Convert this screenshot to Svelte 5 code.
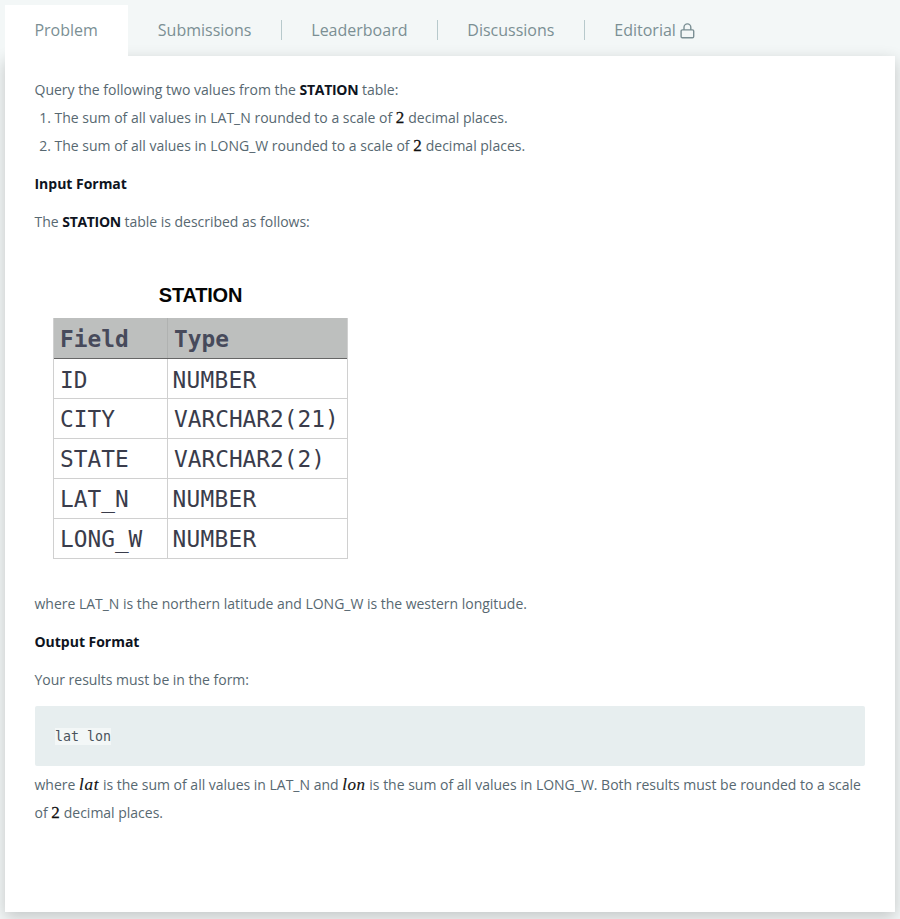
<script>
  const tabs = ['Submissions', 'Leaderboard', 'Discussions'];
  const columns = [
    ['ID', 'NUMBER'],
    ['CITY', 'VARCHAR2(21)'],
    ['STATE', 'VARCHAR2(2)'],
    ['LAT_N', 'NUMBER'],
    ['LONG_W', 'NUMBER']
  ];
</script>

<div class="page">
  <nav>
    <div class="tab active"><span class="label">Problem</span></div>
    {#each tabs as tab}
      <div class="tab"><span class="label">{tab}</span></div>
      <i class="sep"></i>
    {/each}
    <div class="tab">
      <span class="label">Editorial</span>
      <svg class="lock" width="15" height="16" viewBox="0 0 15 16" fill="none" stroke="#7b8f94" stroke-width="1.4">
        <rect x="1.1" y="6.9" width="12.6" height="7.8" rx="1.2" />
        <path d="M4 6.9V4.4a3.4 3.5 0 0 1 6.8 0v2.5" />
      </svg>
    </div>
  </nav>

  <main>
    <p class="tight">Query the following two values from the <strong class="name">STATION</strong> table:</p>
    <ol>
      <li>The sum of all values in LAT_N rounded to a scale of <span class="num">2</span> decimal places.</li>
      <li>The sum of all values in LONG_W rounded to a scale of <span class="num">2</span> decimal places.</li>
    </ol>
    <p><strong>Input Format</strong></p>
    <p>The <strong class="name">STATION</strong> table is described as follows:</p>

    <figure>
      <figcaption>STATION</figcaption>
      <div class="schema">
        <div class="row head"><span>Field</span><span>Type</span></div>
        {#each columns as [field, type]}
          <div class="row"><span>{field}</span><span class:number={type === 'NUMBER'}>{type}</span></div>
        {/each}
      </div>
    </figure>

    <p>where LAT_N is the northern latitude and LONG_W is the western longitude.</p>
    <p><strong>Output Format</strong></p>
    <p>Your results must be in the form:</p>
    <pre><code>lat lon</code></pre>
    <p class="last">where <em class="lat">lat</em> is the sum of all values in LAT_N and <em class="lon">lon</em> is the sum of all values in LONG_W. Both results must be rounded to a scale of <span class="num">2</span> decimal places.</p>
  </main>
</div>

<style>
  :global(body) {
    margin: 0;
    background: #f3f7f7;
  }
  .page {
    box-sizing: border-box;
    height: 919px;
    padding: 5px 5px 7px;
    display: flex;
    flex-direction: column;
    overflow: hidden;
    font-family: 'Open Sans', sans-serif;
    color: #576871;
  }
  nav {
    display: flex;
    height: 51px;
    flex: none;
    font-size: 16px;
    color: #7b8f94;
  }
  .tab {
    display: flex;
    align-items: center;
    box-sizing: border-box;
    height: 51px;
    padding: 0 29.45px 2px;
    white-space: nowrap;
  }
  .tab.active {
    position: relative;
    z-index: 1;
    width: 123px;
    margin-right: 0.4px;
    background: #fff;
  }
  .sep {
    width: 1px;
    height: 20px;
    margin-top: 15px;
    background: #b7c9cc;
  }
  .lock {
    margin: 2px 0 0 4px;
  }
  main {
    flex: 1;
    box-sizing: border-box;
    padding: 20px 30px 0 29.5px;
    background: #fff;
    box-shadow: 0 5px 15px rgba(0, 0, 0, 0.2);
    font-size: 14px;
    line-height: 28px;
    letter-spacing: -0.02px;
  }
  p {
    margin: 0 0 10px;
  }
  p.tight {
    margin: 0;
    letter-spacing: 0;
  }
  p.last {
    letter-spacing: -0.01px;
  }
  strong {
    color: #0e141e;
    font-weight: 700;
  }
  .name {
    letter-spacing: -0.3px;
  }
  ol {
    margin: 0 0 10px;
    padding-left: 20px;
    letter-spacing: 0;
  }
  .num,
  em {
    line-height: 0;
    font-family: 'Liberation Serif', serif;
    color: #111;
  }
  .num {
    margin-right: 0.4px;
    font-size: 17px;
    -webkit-text-stroke: 0.3px #111;
  }
  em {
    font-size: 17px;
    letter-spacing: 0.8px;
    -webkit-text-stroke: 0.15px #111;
  }
  em.lon {
    letter-spacing: 0.6px;
  }
  figure {
    margin: 0 0 31px;
    padding: 36px 0 0 18.5px;
  }
  figcaption {
    width: 295px;
    height: 36px;
    text-align: center;
    font: bold 20px/26px 'Liberation Sans', sans-serif;
    letter-spacing: -0.2px;
    color: #050505;
  }
  .schema {
    width: 295px;
    box-sizing: border-box;
    border: 1px solid #d0d0d0;
    border-top: 0;
    font: 22.8px/40px 'DejaVu Sans Mono', monospace;
    letter-spacing: 0;
    color: #3a3c4b;
  }
  .row {
    display: grid;
    grid-template-columns: 113px 1fr;
    height: 39px;
    border-bottom: 1px solid #d0d0d0;
  }
  .row:nth-child(2) {
    line-height: 42px;
  }
  .row:last-child {
    border-bottom: 0;
  }
  .row span {
    height: 39px;
    padding-left: 6px;
  }
  .row span + span {
    border-left: 1px solid #d0d0d0;
  }
  .row .number {
    padding-left: 4.5px !important;
    letter-spacing: 0.3px;
  }
  .head {
    height: 40px;
    background: #bdbfbe;
    border-bottom-color: #666;
    font-weight: bold;
    line-height: 42px;
    color: #474a5b;
  }
  .head span + span {
    height: 40px;
    border-left-color: #b0b2b1;
  }
  pre {
    box-sizing: border-box;
    height: 60px;
    margin: 12px 0 5px 0.5px;
    padding: 20px;
    border-radius: 2px;
    background: #e7eeef;
    line-height: 20px;
  }
  code {
    font: 13.3px/20px 'DejaVu Sans Mono', monospace;
    letter-spacing: 0;
    background: #f3f7f7;
    padding: 1px 0;
    color: #4a535c;
  }
</style>
